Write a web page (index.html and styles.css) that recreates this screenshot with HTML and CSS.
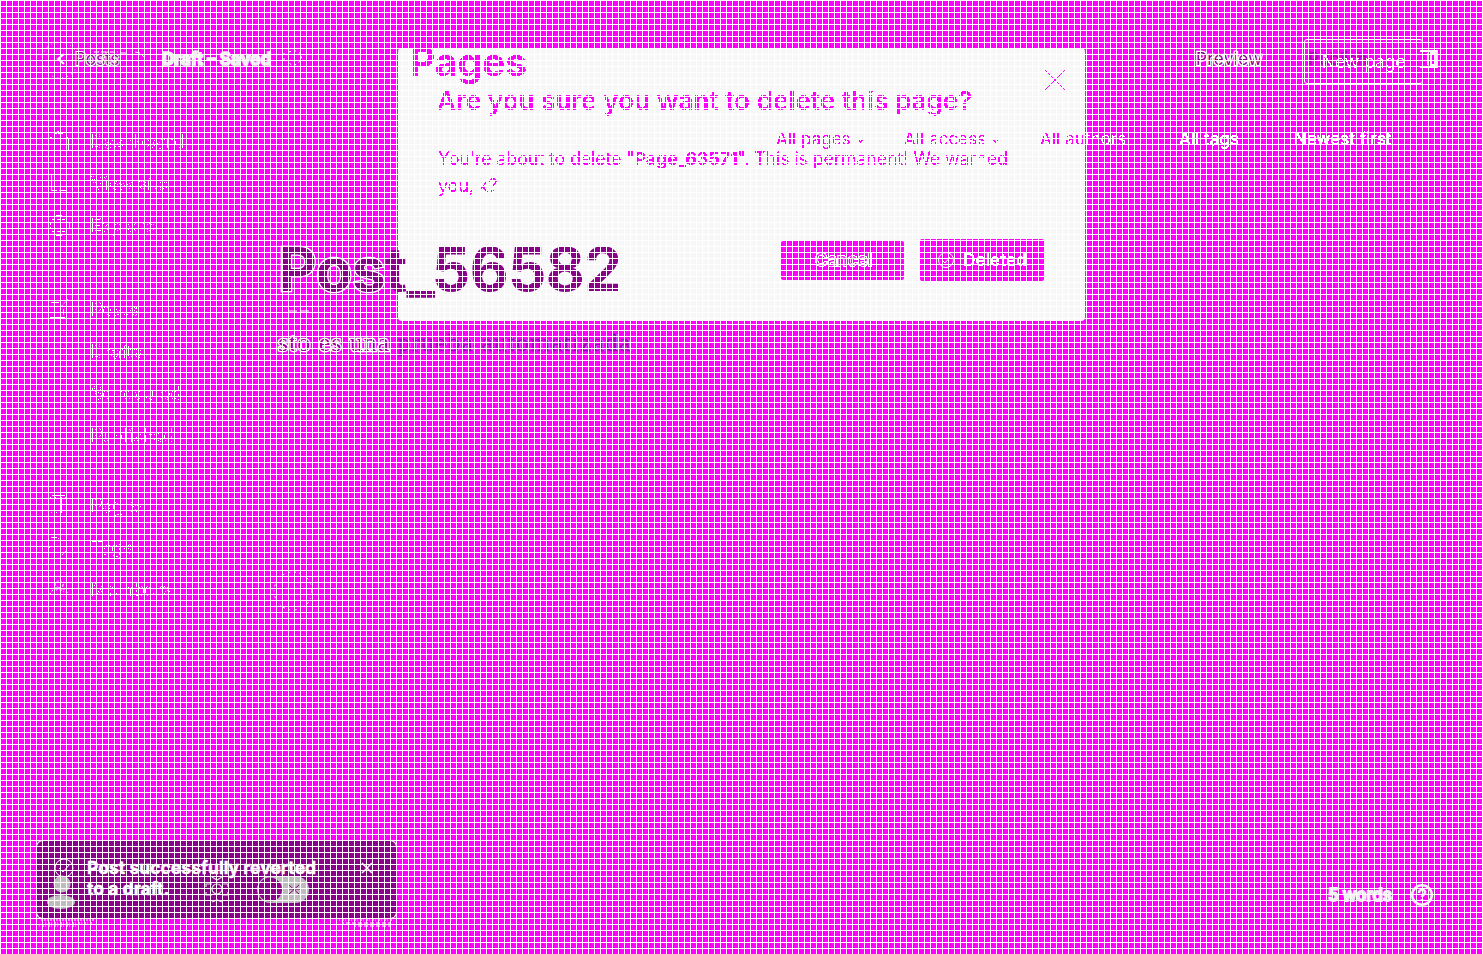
FILE: index.html
```html
<!DOCTYPE html>
<html lang="en">
<head>
<meta charset="utf-8">
<title>Pages</title>
<link rel="stylesheet" href="styles.css">
</head>
<body>
<svg class="defs" width="0" height="0" aria-hidden="true">
  <filter id="crisp" x="-5%" y="-20%" width="110%" height="140%"><feComponentTransfer><feFuncA type="discrete" tableValues="0 0 1 1"/></feComponentTransfer></filter>
  <filter id="flecks" x="-5%" y="-20%" width="110%" height="140%"><feComponentTransfer><feFuncA type="discrete" tableValues="0 0 0 1 1 0 0 0"/></feComponentTransfer></filter>
</svg>
<div class="app">
  <nav class="layer sidebar">
    <a class="item"><svg class="ico" viewBox="0 0 22 22"><path d="M3 20.500h17M20.500 8v12" /><path d="M9 1.500h4M7 3.500h8M2 7.500h2M18 7.500h2" stroke-dasharray="2 1"/></svg><span>Dashboard</span></a>
    <a class="item"><svg class="ico" viewBox="0 0 22 22"><path d="M18 2.500H3.500v16H9M11 18.500h7M3 8.500h6M11 8.500h7"/></svg><span>View site</span></a>
    <a class="item"><svg class="ico" viewBox="0 0 22 22"><path d="M8 1.500h6M8 21.500h6M21.500 8v6"/><path d="M4 5.500h14M2 14.500h18M4 17.500h14M2.500 8v6" stroke-dasharray="3 2"/></svg><span>Explore</span></a>
    <a class="item gap-lg"><svg class="ico" viewBox="0 0 22 22"><path d="M3 4.500h8M2 19.500h15M15.500 11v6"/><path d="M20 1l-8 9" stroke-dasharray="1 1"/></svg><span>Posts</span></a>
    <a class="item sub"><span>Drafts</span></a>
    <a class="item sub"><span>Scheduled</span></a>
    <a class="item sub"><span>Published</span></a>
    <a class="item gap-md"><svg class="ico" viewBox="0 0 22 22"><path d="M4 1.500h13M13.500 3v15"/><path d="M2 3.500h18M3 18.500h17" stroke-dasharray="1 4"/></svg><span>Pages</span></a>
    <a class="item"><svg class="ico" viewBox="0 0 22 22"><path d="M3 1.500h6M10 2.500h1M1 11.500h1M14 19l4-4" stroke-dasharray="6 2"/></svg><span>Tags</span></a>
    <a class="item"><svg class="ico" viewBox="0 0 22 22"><g stroke-dasharray="2 2"><circle cx="11" cy="7" r="4"/><path d="M2 17c1-9 17-9 18 0M6 6l10 8M16 6L6 14"/></g></svg><span>Members</span></a>
  </nav>

  <section class="layer modal">
    <h1 class="page-title">Pages</h1>
    <h2 class="question">Are you sure you want to delete this page?</h2>
    <p class="warning">You're about to delete "<b>Page_63571</b>". This is permanent! We warned<br>you, k?</p>
    <div class="actions">
      <div class="btn cancel"><span>Cancel</span></div>
      <div class="btn deleted"><svg viewBox="0 0 18 18"><circle cx="9" cy="9" r="7.500"/><path d="M5 9l3 3 5-6"/></svg><span>Deleted</span></div>
    </div>
    <svg class="close" viewBox="0 0 20 20"><path d="M0 0l20 20M20 0L0 20"/></svg>
  </section>

  <div class="layer filters">
    <span class="f1">All pages <svg viewBox="0 0 5 3"><path d="M0 0l2.500 2L5 0"/></svg></span><span class="f2">All access <svg viewBox="0 0 5 3"><path d="M0 0l2.500 2L5 0"/></svg></span><span class="f3">All authors</span><span class="f4">All tags</span><span class="f5">Newest first</span>
  </div>

  <header class="layer topbar">
    <svg class="back" viewBox="0 0 10 12"><path d="M8 1L2 6l6 5"/></svg>
    <span class="posts">Posts</span>
    <span class="status">Draft – Saved</span>
    <span class="preview">Preview</span>
    <span class="publish">Publish</span>
  </header>
  <div class="layer new-page"><span>New page</span></div>
  <svg class="layer panel-icon" viewBox="0 0 18 18"><path d="M0 1h17v16H0" /><path d="M8 3v12M11 3h4v12h-4z"/></svg>
  <svg class="layer avatar-ring" viewBox="0 0 40 40"><circle cx="20" cy="20" r="19"/></svg>
  <svg class="layer logo-ring" viewBox="0 0 40 40"><circle cx="20" cy="20" r="18"/></svg>
  <svg class="layer status-flecks" viewBox="0 0 24 20"><path d="M2 5v9M7 4c10-4 15 4 11 9s-8 5-11 2"/></svg>
  <svg class="layer toggle-flecks" viewBox="0 0 52 8"><path d="M0 2h12M16 2h8M27 3h5M41 2l5 1 4 4"/></svg>

  <article class="layer editor">
    <h1><span class="outlined">Pos</span>t_56582</h1>
    <svg class="rule" viewBox="0 0 22 2"><path d="M0 1h9M12 1h9"/></svg>
    <p><b>sto es una</b> <span>prueba automatizada</span></p>
  </article>

  <aside class="layer toast">
    <svg class="check" viewBox="0 0 20 20"><circle cx="10" cy="10" r="9"/><path d="M5 10l4 4 7-8"/></svg>
    <svg class="bottom-icons" viewBox="0 0 270 36">
      <circle cx="15" cy="8" r="8.500" fill="#bdbdbd"/><ellipse cx="14" cy="26" rx="14" ry="7" fill="#bdbdbd"/>
      <g fill="none" stroke="#ddd" stroke-width="1.200"><circle cx="170" cy="13" r="5"/><path d="M165 1l5 3 5-3M159 11V8h6M175 8h6v3M159 16v3h6M175 19h6v-3M165 26l5-2 5 2"/></g>
      <rect x="210" y="0" width="52" height="27" rx="13.500" fill="#bdbdbd"/><circle cx="223" cy="13.500" r="12" fill="#8b008b"/>
      <path d="M242 9l10 9m0-9l-10 9M241 13h12" stroke="#8b008b" fill="none"/>
    </svg>
    <p>Post successfully reverted<br>to a draft.</p>
    <svg class="dismiss" viewBox="0 0 10 10"><path d="M0 0l10 10M10 0L0 10"/></svg>
  </aside>
  <svg class="layer toast-shadow" viewBox="0 0 360 10"><path d="M4 1h54M8 4h48M2 7h40M302 1h54M306 4h48M318 7h36"/></svg>

  <footer class="layer wordcount"><span>5 words</span><svg viewBox="0 0 24 24"><circle cx="12" cy="12" r="9.800"/><path d="M9 10c0-5 7-4 6 0-.500 2-3 2-3 4M12 16v2"/></svg></footer>
  <div class="layer mesh"></div>
</div>
</body>
</html>
```
FILE: styles.css
```css
* { box-sizing: border-box; }
body { margin: 0; font-family: Inter, "Liberation Sans", sans-serif; }
h1, h2, p { margin: 0; }
svg { display: block; fill: none; stroke: #fff; overflow: visible; }
.defs { position: absolute; }
.app { position: relative; width: 1483px; height: 954px; overflow: hidden; background: #f0f; }
.layer { position: absolute; }
.mesh {
  inset: 0; pointer-events: none;
  background:
    repeating-linear-gradient(90deg, #fff 0 1px, transparent 1px 6px),
    repeating-linear-gradient(180deg, #fff 0 1px, transparent 1px 6px);
}

.sidebar { left: 48px; top: 120px; width: 200px; color: #fff; font-size: 18px; }
.item { display: flex; align-items: center; gap: 21px; height: 42px; }
.item span { filter: url(#flecks); }
.item.sub { padding-left: 43px; }
.gap-lg { margin-top: 42px; }
.gap-md { margin-top: 28px; }
.ico { width: 22px; height: 22px; stroke-width: 1; }

.modal { left: 398px; top: 48px; width: 687px; height: 273px; padding-left: 40px; background: #f7f7f7; border-radius: 4px; color: #f0f; }
.page-title { margin-left: -28px; height: 34px; font-size: 39px; line-height: 28px; font-weight: 700; filter: url(#crisp); }
.question { margin-left: -1px; height: 60px; font-size: 26px; line-height: 38px; font-weight: 600; letter-spacing: 0.06px; white-space: nowrap; filter: url(#crisp); }
.warning { margin-top: 3px; font-size: 18px; line-height: 27px; letter-spacing: -0.18px; white-space: nowrap; filter: url(#crisp); }
.actions { display: flex; align-items: center; gap: 16px; margin: 40px 0 0 343px; }
.btn { display: flex; align-items: center; justify-content: center; gap: 9px; width: 124px; background: #f0f; border-radius: 2px; color: #fff; font-size: 17px; }
.btn span { filter: url(#crisp); }
.cancel { width: 123px; height: 39px; padding-left: 2px; }
.cancel span { color: #f0f; -webkit-text-stroke: 2px #fff; paint-order: stroke fill; letter-spacing: 0.3px; }
.deleted { height: 42px; font-weight: 600; gap: 8px; }
.deleted svg { width: 18px; height: 18px; }
.close { position: absolute; left: 647px; top: 22px; width: 20px; height: 20px; stroke: #f0f; }

.filters { left: 776px; top: 128px; display: flex; height: 22px; line-height: 22px; font-size: 17px; letter-spacing: 0.08px; color: #f0f; white-space: nowrap; filter: url(#crisp); }
.filters svg { display: inline-block; width: 5px; height: 3px; margin: 0 0 2px 2px; stroke: #f0f; stroke-width: 1.500; }
.f1 { width: 128px; }
.f2 { width: 136px; }
.f3 { width: 139px; background: linear-gradient(90deg, #f0f 45px, #fff 45px); -webkit-background-clip: text; background-clip: text; color: transparent; }
.f4 { width: 115px; color: #fff; }
.f5 { color: #fff; }
.f4, .f5 { -webkit-text-stroke: 0.400px #fff; }

.topbar { left: 56px; top: 46px; display: flex; align-items: center; height: 26px; font-size: 17px; white-space: nowrap; }
.back { width: 10px; height: 12px; margin-right: 9px; stroke-width: 2; }
.posts { width: 87px; color: #a000a0; -webkit-text-stroke: 2px #f0f0f0; paint-order: stroke fill; }
.status { width: 1034px; color: #f0f0f0; font-weight: 700; -webkit-text-stroke: 1.500px #f0f0f0; }
.preview { width: 112px; color: #900090; -webkit-text-stroke: 2.500px #fff; paint-order: stroke fill; letter-spacing: 0.4px; }
.publish { color: #b000b0; font-weight: 500; }
.new-page { left: 1304px; top: 39px; width: 119px; height: 45px; display: grid; place-items: center; border: 1px solid #fff; border-radius: 3px; color: #fff; font-size: 18px; font-weight: 300; letter-spacing: -0.2px; white-space: nowrap; }
.new-page span { filter: url(#crisp); }
.panel-icon { left: 1420px; top: 50px; width: 18px; height: 18px; stroke-width: 1.800; }
.avatar-ring { left: 273px; top: 571px; width: 40px; height: 40px; stroke-dasharray: 2 5 1 4 2 3 1 8; }
.logo-ring { left: 40px; top: 40px; width: 40px; height: 40px; stroke-dasharray: 1 4; }
.status-flecks { left: 282px; top: 48px; width: 24px; height: 20px; stroke-dasharray: 2 3; }
.toggle-flecks { left: 94px; top: 50px; width: 52px; height: 8px; stroke-dasharray: 5 2 8 3; }

.editor { left: 278px; top: 230px; color: #8b008b; }
.editor h1 { height: 80px; font-size: 60px; line-height: 78px; font-weight: 700; letter-spacing: -0.55px; white-space: nowrap; }
.outlined { -webkit-text-stroke: 2.500px #fff; paint-order: stroke fill; }
.rule { width: 22px; height: 2px; margin-left: 10px; }
.editor p { height: 36px; margin-top: 13px; font-family: "Liberation Serif", serif; font-size: 26px; line-height: 36px; letter-spacing: 0.95px; white-space: nowrap; }
.editor b { color: #a000a0; -webkit-text-stroke: 2.500px #fff; paint-order: stroke fill; font-weight: 400; }
.editor p span { color: #a000c0; -webkit-text-stroke: 0.300px #a000c0; text-shadow: 1px 0 rgba(255, 255, 255, 0.5); }

.toast { left: 37px; top: 841px; width: 359px; height: 77px; padding: 16px 0 0 50px; background: #8b008b; border-radius: 6px; box-shadow: 0 0 0 1px #fff; color: #fff; }
.toast p { position: relative; font-size: 17.500px; line-height: 21px; font-weight: 700; letter-spacing: 0.03px; white-space: nowrap; -webkit-text-stroke: 0.400px #fff; }
.check { position: absolute; left: 17px; top: 17px; width: 20px; height: 20px; }
.bottom-icons { position: absolute; left: 10px; top: 35px; width: 270px; height: 36px; stroke: none; }
.dismiss { position: absolute; left: 325px; top: 22px; width: 10px; height: 10px; stroke-width: 1.500; }
.toast-shadow { left: 37px; top: 919px; width: 360px; height: 10px; stroke-dasharray: 1 2 2 1; }

.wordcount { left: 1328px; top: 883px; display: flex; align-items: center; gap: 18px; height: 24px; color: #f0f0f0; font-size: 16.700px; font-weight: 500; white-space: nowrap; }
.wordcount span { -webkit-text-stroke: 1.800px #f0f0f0; }
.wordcount svg { width: 24px; height: 24px; stroke: #f0f0f0; stroke-width: 2.600; }
```
